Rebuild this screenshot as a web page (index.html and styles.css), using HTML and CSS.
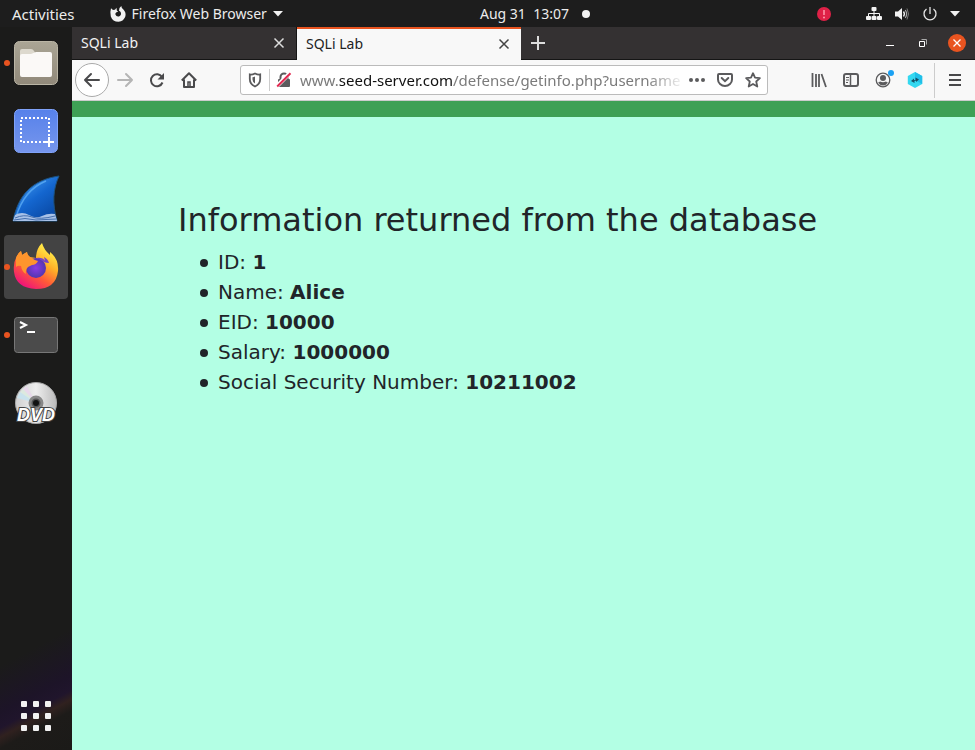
FILE: index.html
```html
<!DOCTYPE html>
<html lang="en">
<head>
<meta charset="utf-8">
<title>SQLi Lab</title>
<link rel="stylesheet" href="styles.css">
</head>
<body>
<header class="topbar">
  <button class="top-btn activities">Activities</button>
  <button class="top-btn app-menu">
    <svg width="16" height="16" viewBox="0 0 16 16"><path fill="#f2f2f2" fill-rule="evenodd" d="M1 2.200 3 4Q4 3.500 5 3.700L6.500 1.800 6.800 4.500 8.200 5.400 6.500 6.300Q5 7 5.400 8.500 6.400 11 9 10.400 11.500 9.500 10.900 6.800 10.500 5.300 9 4.800 8.500 2 11.300 0 11.500 2.200 13.200 3.300 16.300 6.500 15.400 10.200 13.800 15.200 8.500 15.800 2.600 15.700.8 10.500-.2 6 1 2.200Z"/></svg>
    <span>Firefox Web Browser</span>
    <svg width="10" height="6" viewBox="0 0 10 6"><path fill="#f2f2f2" d="M0 0h10L5 5.500z"/></svg>
  </button>
  <button class="top-btn clock"><span>Aug 31&nbsp; 13:07</span><i class="notice"></i></button>
  <div class="status">
    <svg class="alert" width="16" height="16" viewBox="0 0 16 16"><circle cx="8" cy="8" r="7" fill="#df2147"/><path d="M8 4v5" stroke="#ff9aab" stroke-width="1.500"/><circle cx="8" cy="11.500" r="1" fill="#ff9aab"/></svg>
    <svg width="16" height="16" viewBox="0 0 16 16"><g fill="#f2f2f2"><rect x="5.500" y="1" width="5" height="4" rx="1"/><rect x="0" y="10" width="5" height="4" rx="1"/><rect x="5.500" y="10" width="5" height="4" rx="1"/><rect x="11" y="10" width="5" height="4" rx="1"/></g><path d="M8 5v5M2.500 10V7.500h11V10" fill="none" stroke="#f2f2f2"/></svg>
    <svg width="16" height="16" viewBox="0 0 16 16"><path fill="#f2f2f2" d="M1 5.500h3L8 2v12L4 10.500H1z"/><path d="M9.500 5.500q1.800 2.500 0 5" fill="none" stroke="#f2f2f2" stroke-width="1.300"/><path d="M11.300 4q2.600 4 0 8" fill="none" stroke="#aaa" stroke-width="1.200"/><path d="M13 2.500q3 5.500 0 11" fill="none" stroke="#777"/></svg>
    <svg width="16" height="16" viewBox="0 0 16 16"><path d="M4.500 3A6 6 0 1 0 11.500 3M8 1v7" fill="none" stroke="#e4e4e4" stroke-width="1.300"/></svg>
    <svg width="10" height="6" viewBox="0 0 10 6"><path fill="#f2f2f2" d="M0 0h10L5 5.500z"/></svg>
  </div>
</header>

<div class="desktop">
  <nav class="dock" aria-label="Applications">
    <button class="dock-item running" aria-label="Files">
      <svg width="46" height="46" viewBox="0 0 46 46"><defs><linearGradient id="file" x2="0" y2="1"><stop stop-color="#aaa595"/><stop offset="1" stop-color="#91897a"/></linearGradient></defs><rect x="1.500" y="1.500" width="43" height="43" rx="5" fill="url(#file)" stroke="#bab5a5"/><path d="M7 11q0-2 2-2h9q2 0 3 2l2 3v8H7z" fill="#ddd9ce"/><path d="M7 16q0-2 2-2h9l5-2h14q2 0 2 2v21q0 2-2 2H9q-2 0-2-2z" fill="#fbf9f7"/></svg>
    </button>
    <button class="dock-item" aria-label="Screenshot">
      <svg width="46" height="46" viewBox="0 0 46 46"><defs><linearGradient id="shot" x2="0" y2="1"><stop stop-color="#5681ea"/><stop offset="1" stop-color="#7796ed"/></linearGradient></defs><rect x="1.500" y="1.500" width="43" height="43" rx="5" fill="url(#shot)" stroke="#7fa2f8"/><rect x="8" y="10" width="28" height="24" fill="none" stroke="#fff" stroke-width="2" stroke-dasharray="2 2"/><path d="M36 29v10M31 34h10" stroke="#fff" stroke-width="2"/></svg>
    </button>
    <button class="dock-item" aria-label="Wireshark">
      <svg width="50" height="50" viewBox="0 0 50 50"><defs><linearGradient id="fin" x1=".2" x2=".8" y1=".2" y2="1"><stop stop-color="#378ee8"/><stop offset=".4" stop-color="#1466cf"/><stop offset="1" stop-color="#0846a0"/></linearGradient></defs><path d="M2 47C7 22 20 6 48 2C42 15 41 29 46 47Z" fill="url(#fin)" stroke="#1d527f"/><path d="M5 43Q13 16 35 7" fill="none" stroke="#64b5fa" stroke-width="1.500" opacity=".7"/><path d="M2 47 4 41Q11 37 18 41T31 42 44 40L46 47Z" fill="#a9c2e8"/><path d="M4 44q9-4 17-1t23-1M3 46q11-3 22 0l20-1" fill="none" stroke="#446fae"/></svg>
    </button>
    <button class="dock-item running active" aria-label="Firefox">
      <svg width="48" height="48" viewBox="0 0 48 48"><defs><linearGradient id="flame" x1=".8" y1=".1" x2=".25" y2=".95"><stop stop-color="#fff04b"/><stop offset=".35" stop-color="#ffae27"/><stop offset=".65" stop-color="#ff5b37"/><stop offset="1" stop-color="#f01578"/></linearGradient><radialGradient id="globe"><stop stop-color="#8a3be4"/><stop offset="1" stop-color="#5337ae"/></radialGradient></defs><path d="M4 15Q6 10 9 8L10 12 15 9Q15 12 18 14L24 15Q24 6 30 0Q32 7 38 12L38 9Q47 16 46 28Q44 46 24 46Q4 45 2 29Q1 20 4 15Z" fill="url(#flame)"/><circle cx="24" cy="25" r="10" fill="url(#globe)"/><path d="M24 15Q31 14 33 18L32 14Q36 16 37 20Q32 20 29 17Z" fill="#7542c5"/><path d="M4 15Q6 10 9 8L10 12 15 9Q15 12 18 14Q22 17 26 18Q24 22 20 22L16 24Q13 27 14 31Q10 29 9 23Q6 22 4 24Z" fill="#ff952d"/></svg>
    </button>
    <button class="dock-item running" aria-label="Terminal">
      <svg width="46" height="46" viewBox="0 0 46 46"><rect x="1.500" y="5.500" width="43" height="35" rx="3" fill="#4b4b4b" stroke="#777"/><path d="m7 10 6 3-6 3M14 20h8" fill="none" stroke="#fff" stroke-width="2"/></svg>
    </button>
    <button class="dock-item" aria-label="DVD drive">
      <svg width="46" height="46" viewBox="0 0 46 46"><defs><linearGradient id="disc"><stop stop-color="#d0d0d0"/><stop offset=".5" stop-color="#eee"/><stop offset="1" stop-color="#bbb"/></linearGradient></defs><circle cx="23" cy="23" r="20.500" fill="url(#disc)" stroke="#aaa"/><path d="M23 23 5 17Q8 9 14 6Z" fill="#dce9df"/><path d="M23 23 10 9 14 6Z" fill="#e8d8eb"/><path d="M23 23 4 18 7 12Z" fill="#c9e2ed"/><circle cx="23" cy="23" r="6" fill="#555" stroke="#888" stroke-width="3"/><circle cx="23" cy="23" r="3" fill="#111"/><text class="dvd" x="23" y="41" text-anchor="middle">DVD</text></svg>
    </button>
    <button class="dock-item apps" aria-label="Show applications">
      <svg width="30" height="30" viewBox="0 0 30 30" fill="#f2f2f2"><rect width="6" height="6" rx="1"/><rect x="12" width="6" height="6" rx="1"/><rect x="24" width="6" height="6" rx="1"/><rect y="12" width="6" height="6" rx="1"/><rect x="12" y="12" width="6" height="6" rx="1"/><rect x="24" y="12" width="6" height="6" rx="1"/><rect y="24" width="6" height="6" rx="1"/><rect x="12" y="24" width="6" height="6" rx="1"/><rect x="24" y="24" width="6" height="6" rx="1"/></svg>
    </button>
  </nav>

  <div class="window">
    <div class="tabs">
      <div class="tab"><span>SQLi Lab</span><button class="icon-btn" aria-label="Close tab"><svg width="10" height="10" viewBox="0 0 10 10"><path d="m.5.500 9 9m0-9-9 9" stroke="#ddd" stroke-width="1.500"/></svg></button></div>
      <div class="tab selected"><span>SQLi Lab</span><button class="icon-btn" aria-label="Close tab"><svg width="10" height="10" viewBox="0 0 10 10"><path d="m.5.500 9 9m0-9-9 9" stroke="#444" stroke-width="1.500"/></svg></button></div>
      <button class="icon-btn new-tab" aria-label="New tab"><svg width="14" height="14" viewBox="0 0 14 14"><path d="M7 0v14M0 7h14" stroke="#ddd" stroke-width="2"/></svg></button>
      <div class="controls">
        <button class="icon-btn" aria-label="Minimize"><svg width="16" height="16" viewBox="0 0 16 16"><path d="M4 10.500h8" stroke="#fff"/></svg></button>
        <button class="icon-btn" aria-label="Restore"><svg width="16" height="16" viewBox="0 0 16 16"><path d="M4.500 6.500h5v5h-5z" fill="none" stroke="#fff"/><path d="M6.500 4.500h5v5" fill="none" stroke="#aaa"/></svg></button>
        <button class="icon-btn" aria-label="Close"><svg width="18" height="18" viewBox="0 0 18 18"><circle cx="9" cy="9" r="9" fill="#e95420"/><path d="m5.500 5.500 7 7m0-7-7 7" stroke="#fff" stroke-width="1.300"/></svg></button>
      </div>
    </div>

    <div class="toolbar">
      <button class="icon-btn back" aria-label="Back"><svg width="18" height="16" viewBox="0 0 18 16"><path d="M8 2 2 8l6 6M2 8h14" fill="none" stroke="#4a4a4c" stroke-width="2" stroke-linejoin="round" stroke-linecap="round"/></svg></button>
      <button class="icon-btn nav" aria-label="Forward"><svg width="16" height="16" viewBox="0 0 16 16"><path d="m9 2 6 6-6 6M15 8H1" fill="none" stroke="#b5b5b5" stroke-width="2" stroke-linejoin="round" stroke-linecap="round"/></svg></button>
      <button class="icon-btn nav" aria-label="Reload"><svg width="16" height="16" viewBox="0 0 16 16"><path d="M13 5A6 6 0 1 0 13.500 10.500" fill="none" stroke="#4a4a4c" stroke-width="2"/><path d="M15 1v6.500H8.500z" fill="#4a4a4c"/></svg></button>
      <button class="icon-btn nav" aria-label="Home"><svg width="16" height="16" viewBox="0 0 16 16"><path d="M.800 8.500 8 1.300l7.200 7.200M3 7.500V15h10V7.500" fill="none" stroke="#4a4a4c" stroke-width="2" stroke-linejoin="round"/><path d="M7 15v-5h2v5" fill="none" stroke="#4a4a4c" stroke-width="1.500"/></svg></button>
      <div class="urlbar">
        <button class="icon-btn shield" aria-label="Tracking protection"><svg width="14" height="16" viewBox="0 0 14 16"><path d="M7 1.500q3 1.500 5.200 1v4.500q0 5-5.200 7.500Q1.800 12 1.800 7V2.500Q4 3 7 1.500Z" fill="none" stroke="#5b5b5d" stroke-width="1.800"/><path d="M7 4.500v7Q4.500 10 4.500 7.500V5.300Q6 5.200 7 4.500Z" fill="#5b5b5d"/></svg></button>
        <button class="icon-btn lock" aria-label="Connection is not secure"><svg width="16" height="16" viewBox="0 0 16 16"><rect x="2" y="7" width="12" height="8" rx="1" fill="#5b5b5d"/><path d="M4.500 7V5a3.500 3.500 0 0 1 7 0v2" fill="none" stroke="#5b5b5d" stroke-width="2"/><path d="M1 14 14 1" stroke="#fff" stroke-width="4"/><path d="M1.200 14.500 14.500 1.200" stroke="#e22850" stroke-width="2"/></svg></button>
        <label class="address"><span class="url">www.<b>seed-server.com</b>/defense/getinfo.php?username</span><input type="text" aria-label="Address"></label>
        <button class="icon-btn" aria-label="Page actions"><svg width="16" height="16" viewBox="0 0 16 16" fill="#5b5b5d"><circle cx="2" cy="8" r="2"/><circle cx="8" cy="8" r="2"/><circle cx="14" cy="8" r="2"/></svg></button>
        <button class="icon-btn" aria-label="Save to Pocket"><svg width="16" height="16" viewBox="0 0 16 16"><path d="M2 2h12q1 0 1 1v4.500A7 6.500 0 0 1 1 7.500V3q0-1 1-1Z" fill="none" stroke="#5b5b5d" stroke-width="2"/><path d="M4.700 6 8 9.200 11.300 6" fill="none" stroke="#5b5b5d" stroke-width="2" stroke-linecap="round"/></svg></button>
        <button class="icon-btn" aria-label="Bookmark"><svg width="16" height="16" viewBox="0 0 16 16"><path d="m8 1.200 2 4.500 4.900.500-3.700 3.300 1.100 5L8 12l-4.300 2.500 1.100-5L1.100 6.200 6 5.700Z" fill="none" stroke="#5b5b5d" stroke-width="1.800" stroke-linejoin="round"/></svg></button>
      </div>
      <div class="tools">
        <button class="icon-btn" aria-label="Library"><svg width="16" height="16" viewBox="0 0 16 16"><path d="M1.500 1v14M5 2v13M8 2v13M10.500 2l4.500 13" stroke="#5b5b5d" stroke-width="1.800"/></svg></button>
        <button class="icon-btn" aria-label="Sidebar"><svg width="16" height="16" viewBox="0 0 16 16"><rect x="1" y="2" width="14" height="12" rx="2" fill="none" stroke="#5b5b5d" stroke-width="2"/><path d="M7.500 2v12" stroke="#5b5b5d" stroke-width="1.500"/><path d="M3 5.500h3M3 8h3M3 10.500h2" stroke="#5b5b5d"/></svg></button>
        <button class="icon-btn" aria-label="Account"><svg class="account" width="20" height="20" viewBox="0 0 20 20"><circle cx="10" cy="10" r="6.800" fill="none" stroke="#5b5b5d" stroke-width="1.300"/><circle cx="10" cy="8" r="3" fill="#5b5b5d"/><path d="M5 12.500q1 0 2-1 3 1.500 6 0 1 1 2 1-2 3-5 3t-5-3Z" fill="#5b5b5d"/><circle cx="18" cy="3" r="3" fill="#1ba1f3"/></svg></button>
        <button class="icon-btn" aria-label="Extension"><svg width="16" height="16" viewBox="0 0 16 16"><path d="m8 0 7.200 4v8L8 16 .800 12V4Z" fill="#34d8f0"/><path d="m8 0 7.200 4v8L8 8Z" fill="#20bfe9"/><path d="M4 9 7 6.500V8h1.500V5.500L12 7.500 9 10V8.800H7.500V11Z" fill="#164e64"/></svg></button>
      </div>
      <button class="icon-btn menu" aria-label="Open menu"><svg width="12" height="12" viewBox="0 0 12 12"><path d="M0 1h12M0 6h12M0 11h12" stroke="#48484a" stroke-width="2"/></svg></button>
    </div>

    <main class="page">
      <div class="banner"></div>
      <section class="content">
        <h1>Information returned from the database</h1>
        <ul>
          <li>ID: <b>1</b></li>
          <li>Name: <b>Alice</b></li>
          <li>EID: <b>10000</b></li>
          <li>Salary: <b>1000000</b></li>
          <li>Social Security Number: <b>10211002</b></li>
        </ul>
      </section>
    </main>
  </div>
</div>
</body>
</html>
```
FILE: styles.css
```css
* { box-sizing: border-box; }
body {
  margin: 0;
  min-height: 100vh;
  display: flex;
  flex-direction: column;
  background: #1c1c1b;
  font: 14px/20px "Noto Sans", sans-serif;
}
button {
  border: 0;
  padding: 0;
  background: none;
  color: inherit;
  font: inherit;
}
svg { display: block; flex: none; overflow: visible; }

.topbar {
  display: flex;
  align-items: center;
  height: 27px;
  padding: 0 15px 0 12px;
  background: #1d1d1d;
  color: #ececec;
}
.top-btn { display: flex; align-items: center; white-space: nowrap; }
.activities { font-size: 15px; }
.app-menu { gap: 6px; margin-left: 35px; }
.clock { gap: 13px; margin: 0 auto; }
.notice { width: 8px; height: 8px; border-radius: 50%; background: #f2f2f2; }
.status { display: flex; align-items: center; gap: 12px; padding-left: 29px; }
.alert { margin-right: 22px; }

.desktop { flex: 1; display: flex; }
.dock {
  display: flex;
  flex-direction: column;
  gap: 4px;
  width: 72px;
  padding: 4px;
  background:
    linear-gradient(152deg, transparent 35%, #1d1428 60%, #20152c 68%, #30211f 73%, #1d1b19 79%, #1b1a18) bottom / 100% 150px no-repeat,
    #1b1b1a;
}
.dock-item {
  position: relative;
  display: grid;
  place-items: center;
  height: 64px;
  border-radius: 4px;
}
.active { background: #434343; }
.running::before {
  content: "";
  position: absolute;
  left: 0;
  top: 29px;
  width: 6px;
  height: 6px;
  border-radius: 50%;
  background: #e95420;
}
.apps { margin-top: auto; margin-bottom: -2px; }
.dvd {
  font: italic bold 18px "Liberation Sans", sans-serif;
  fill: #fff;
  stroke: #444;
  stroke-width: 2px;
  paint-order: stroke;
}

.window { flex: 1; min-width: 0; display: flex; flex-direction: column; }
.icon-btn { display: grid; place-items: center; flex: none; }
.tabs {
  display: flex;
  height: 33px;
  background: #343132;
  color: #f2f2f2;
  border-bottom: 1px solid #151515;
}
.tab {
  display: flex;
  align-items: center;
  justify-content: space-between;
  flex: 0 1 225px;
  padding: 0 12px 0 9px;
  border-right: 1px solid #151515;
}
.selected {
  flex-basis: 224px;
  height: 33px;
  padding-bottom: 2px;
  background: #f8f8f8;
  color: #222;
  border-top: 2px solid #e95420;
  border-right: 0;
}
.new-tab { margin-left: 10px; }
.controls { display: flex; gap: 17px; margin-left: auto; padding-right: 9px; }

.toolbar {
  display: flex;
  align-items: center;
  height: 41px;
  padding-left: 3px;
  background: #f8f8f8;
  border-bottom: 1px solid #ccc;
}
.back {
  width: 34px;
  height: 34px;
  border: 1px solid #aaa;
  border-radius: 50%;
  background: #fff;
}
.nav { width: 32px; height: 32px; }
.urlbar {
  flex: 1;
  display: flex;
  align-items: center;
  gap: 12px;
  min-width: 0;
  height: 30px;
  margin-left: 35px;
  padding: 0 6px;
  background: #fff;
  border: 1px solid #bbb;
  border-radius: 3px;
}
.shield { height: 22px; padding: 0 7px 0 1px; border-right: 1px solid #ccc; }
.lock { margin-left: -6px; }
.address {
  position: relative;
  flex: 1;
  min-width: 0;
  margin: 0 -8px 0 -4px;
  overflow: hidden;
  font-size: 15px;
}
.url {
  display: block;
  color: #7b7b7b;
  white-space: nowrap;
  mask-image: linear-gradient(to right, #000 90%, transparent);
}
.url b { color: #111; font-weight: 400; }
.address input {
  position: absolute;
  inset: 0;
  width: 100%;
  border: 0;
  padding: 0;
  background: transparent;
  font: inherit;
}
.tools { display: flex; align-items: center; gap: 16px; margin: 0 11px 0 43px; }
.account { margin: 0 -2px; }
.menu { width: 41px; height: 35px; border-left: 1px solid #ccc; }

.page { flex: 1; background: #b3ffe4; color: #212529; font-family: "DejaVu Sans", sans-serif; }
.banner { height: 16px; background: #3ea055; }
.content { padding: 84px 24px 24px 106px; }
h1 { margin: 0 0 8px; font-size: 32px; line-height: 38px; font-weight: 400; }
ul { margin: 0; padding-left: 40px; font-size: 20px; line-height: 30px; list-style: none; }
li { position: relative; }
li::before {
  content: "";
  position: absolute;
  left: -18px;
  top: 12px;
  width: 8px;
  height: 8px;
  border-radius: 50%;
  background: currentColor;
}
```
